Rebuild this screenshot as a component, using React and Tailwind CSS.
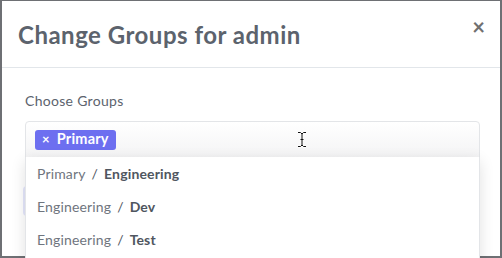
import React from 'react';

const options = [
    { parent: 'Primary', name: 'Engineering' },
    { parent: 'Engineering', name: 'Dev' },
    { parent: 'Engineering', name: 'Test' },
];

const IBeam = () => (
    <svg width="10" height="17" viewBox="0 0 10 17" className="absolute left-[271px] top-[9px]">
        <path d="M1 1.5h2.5L5 3l1.5-1.5H9M1 15.5h2.5L5 14l1.5 1.5H9M5 3v11M3.5 8.5h3" fill="none" stroke="#fff" strokeWidth="2.4" />
        <path d="M1 1.5h2.5L5 3l1.5-1.5H9M1 15.5h2.5L5 14l1.5 1.5H9M5 3v11M3.5 8.5h3" fill="none" stroke="#111" strokeWidth="1" />
    </svg>
);

export default function App() {
    return (
        <div
            className="w-[502px] h-[258px] bg-[#6e7074] pt-px px-[2px] pb-[2px] overflow-hidden"
            style={{ fontFamily: 'Lato, "Open Sans", Arial, sans-serif' }}
        >
            <div className="bg-white h-full flex flex-col">
                <div className="h-[67px] shrink-0 pl-[16px] pr-[15px] flex items-center justify-between border-b border-[#e2e6ea]">
                    <h1 className="text-[24px] font-bold text-[#5c636d] tracking-[0.5px] pt-[1px]">Change Groups for admin</h1>
                    <span className="text-[22px] font-bold text-[#707070] leading-none -mt-[14px]">×</span>
                </div>

                <div className="pl-[23px] pr-[20px] pt-[24px] relative">
                    <label className="block text-[14px] text-[#5c636d] tracking-[0.3px] leading-[17px] mb-[12px]">Choose Groups</label>

                    <div className="relative">
                        <div className="relative h-[37px] rounded-t-[4px] border border-[#e3e5e8] bg-gradient-to-b from-white to-[#f4f4f5] flex items-center px-[9px]">
                            <span className="bg-[#6d6ff0] text-white text-[14.5px] font-bold tracking-[0.2px] rounded-[3px] h-[20px] px-[7px] flex items-center gap-[7px] leading-none">
                                <span className="text-[13px]">×</span>
                                Primary
                            </span>
                            <IBeam />
                        </div>

                        {/* button hidden under the menu */}
                        <div className="mt-[28px] -ml-[2px] h-[30px] w-[80px] rounded-[4px] bg-[#e4e6fb]" />

                        <div className="absolute left-0 right-0 top-[36px] h-[110px] bg-white border-x border-[#e3e5e8] shadow-[0_4px_14px_rgba(0,0,0,0.12)]">
                            {options.map((o) => (
                                <div key={o.parent + o.name} className="h-[33px] flex items-center px-[11px] text-[14px] tracking-[0.15px] text-[#6f757e]">
                                    <span>{o.parent}</span>
                                    <span className="mx-[6px] text-[#4f5660]">/</span>
                                    <span className="font-bold text-[#4f5660]">{o.name}</span>
                                </div>
                            ))}
                        </div>
                    </div>
                </div>
            </div>
        </div>
    );
}
